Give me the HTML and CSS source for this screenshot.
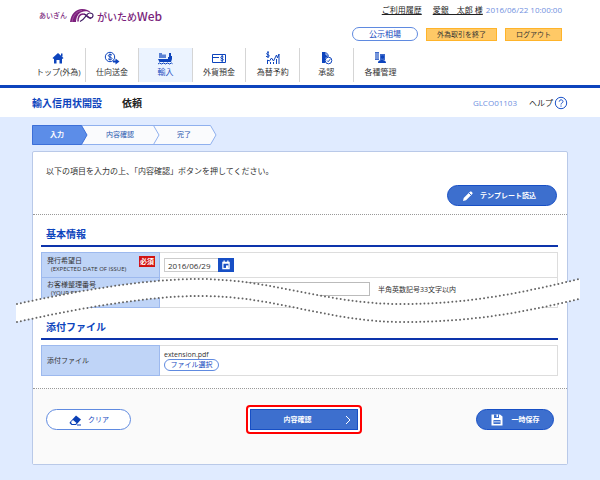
FILE: index.html
```html
<!DOCTYPE html>
<html lang="ja">
<head>
<meta charset="utf-8">
<title>輸入信用状開設 依頼</title>
<link rel="stylesheet" href="styles.css">
</head>
<body>
<header class="site-header">
  <div class="brand">
    <span class="brand-bank">あいぎん</span>
    <svg class="brand-mark" viewBox="0 0 24 14" aria-hidden="true">
      <path d="M0 13C1 5 6 0 12 0c4 0 7 1 9 4-3-2-7-2-9-1C8 4 6 9 6 13z" fill="#7b1f7c"/>
      <path d="M2 13C3 6 7 2 12 1.500" fill="none" stroke="#b36db2" stroke-width=".7"/>
      <path d="M8 12.500c0-5 2-7.500 5-7.500 4 0 5 4 8 4.500" fill="none" stroke="#7b1f7c" stroke-width="1.500"/>
      <path d="M14 5c2 0 3 4 6 4 2 0 3-1 3-2.500C23 4.500 21 4 19.500 4c-3 0-4 6-9.500 8.500" fill="none" stroke="#432066" stroke-width="1.200"/>
    </svg>
    <span class="brand-name">がいため<span class="brand-web">Web</span></span>
  </div>
  <div class="account">
    <p class="user-line"><a class="history" href="#">ご利用履歴</a><a href="#">愛銀　太郎 様</a><time>2016/06/22 10:00:00</time></p>
    <div class="account-actions">
      <button class="btn-rate" type="button">公示相場</button>
      <button class="btn-amber btn-finish" type="button">外為取引を終了</button>
      <button class="btn-amber btn-logout" type="button">ログアウト</button>
    </div>
  </div>
</header>
<nav class="main-nav">
  <a href="#"><svg viewBox="0 0 16 14"><path d="M8 2l5.500 5-1 1-.5-.400V12.500H9.500V9h-3v3.500H4V7.600l-.5.400-1-1z"/><path d="M11 2.500h1.500v3H11z"/></svg>トップ(外為)</a>
  <a href="#"><svg viewBox="0 0 16 14"><g class="line"><circle cx="6" cy="6" r="4.700"/><path d="M8 4.200C7 3 4.300 3.300 4.300 4.700S8 6 8 7.500 5 9 4 7.700M6 2.500v7"/></g><path d="M9 9.500h2.500V7.500l4 3-4 3v-2H9z"/></svg>仕向送金</a>
  <a class="current" href="#" aria-current="page"><svg viewBox="0 0 16 14"><path d="M1 8h10V6h1V2h2v3h1v3l-1 3H2.500z"/><path d="M2 2h3v1.500h4V7H2z" opacity=".65"/><path d="M1 13l1.500-1 2 1 2-1 2 1 2-1 2 1 2-1 1 .700" class="line"/></svg>輸入</a>
  <a href="#"><svg viewBox="0 0 16 14"><g class="line"><path d="M1.500 3.500h13v8h-13zM1.500 6.500H8"/><path d="M12.500 6C11 4.500 9 6 10 7.200l2 .800c1 1.500-1 2.500-2.500 1M11.200 4v7"/></g></svg>外貨預金</a>
  <a href="#"><svg viewBox="0 0 16 14"><g class="line"><path d="M4 2C3 .800 1 2 2 3.400l2 .800c1 1.500-1 2.500-3 1M3 0v7"/><path d="M2.500 13V9l2 1 2-3 2 3 3-6 1 3 1.500-4v10M5.500 13v-2m3 2v-2m3 2V8"/></g></svg>為替予約</a>
  <a href="#"><svg viewBox="0 0 16 14"><path d="M4 1h4l3 3v1.500C8 5.500 7 7 7 9v3H4z"/><path d="M8 1v3h3" stroke="#fff" stroke-width=".7" fill="none"/><g class="line"><circle cx="10.500" cy="9.500" r="3.300"/><path d="M9 9.500l1.200 1.200 2-2.500"/></g></svg>承認</a>
  <a href="#"><svg viewBox="0 0 16 14"><path d="M3 1h4v8H3zM8 3h5v6H8z" opacity=".8"/><circle cx="10.500" cy="6" r="1.700"/><path d="M6 12c0-3 2.500-3 4.500-3s3.500 1 3.500 3z"/><path d="M3 3h4M3 5h4M3 7h4" stroke="#fff" stroke-width=".6" fill="none"/></svg>各種管理</a>
</nav>
<div class="title-bar">
  <h1>輸入信用状開設<span>依頼</span></h1>
  <span class="screen-id">GLCO01103</span>
  <a class="help" href="#">ヘルプ<svg viewBox="0 0 14 14" aria-hidden="true"><circle cx="7" cy="7" r="5.700"/><path d="M5.200 5.700C5.200 3.200 9 3.300 9 5.500 9 7 7 6.800 7 8.500M7 9.500v1.200"/></svg></a>
</div>
<main>
  <div class="steps">
    <svg viewBox="0 0 185 20" aria-hidden="true">
      <path d="M.5.5h178l5.500 9.500-5.500 9.500H.5z" fill="#fafbfd" stroke="#8fb0ee"/>
      <path d="M121.500.5l5.500 9.500-5.500 9.500" fill="none" stroke="#8fb0ee"/>
      <path d="M.5.5h49L55 10l-5.500 9.500H.5z" fill="#5c8de8" stroke="#3c6fd8"/>
    </svg>
    <ol><li class="active">入力</li><li>内容確認</li><li>完了</li></ol>
  </div>
  <form class="card">
    <section class="intro">
      <p>以下の項目を入力の上、「内容確認」ボタンを押してください。</p>
      <button class="pill template" type="button"><svg viewBox="0 0 12 12"><path d="M1 11l.7-3L8 1.700C9 .500 11.500 3 10.300 4L4 10.300z"/><path d="M7 3l2.200 2.200" stroke="#3d6fce"/></svg>テンプレート読込</button>
    </section>
    <section class="fields">
      <h2>基本情報</h2>
      <div class="torn">
        <table>
          <tr class="row-date">
            <th><div class="label-line"><label for="issue">発行希望日<small>(EXPECTED DATE OF ISSUE)</small></label><em>必須</em></div></th>
            <td><div class="date"><input id="issue" type="text" value="2016/06/29"><button type="button" aria-label="カレンダー"><svg viewBox="0 0 12 12"><path d="M1.500 2H3V.500h1.500V2h3V.500H9V2h1.500v9h-9z"/><path d="M3 4.500h6v5H3z" fill="#174fc5"/><path d="M6 6.500h3V10H6z"/></svg></button></div></td>
          </tr>
          <tr class="row-ref">
            <th><label for="ref">お客様整理番号<small>(YOUR REF NO.)</small></label></th>
            <td><div class="ref"><input id="ref" type="text"><span>半角英数記号33文字以内</span></div></td>
          </tr>
        </table>
        <svg class="wave" viewBox="0 0 565 46" preserveAspectRatio="none" aria-hidden="true">
          <path class="band" d="M0 26C60 13 130 1 182 1c76 0 127 25 204 25 67 0 120-11 179-25v20c-59 14-110 23-177 23-77 0-126-26-204-26C130 18 60 31 0 44z"/>
          <path class="dots" d="M1 26C60 13 130 1 182 1c76 0 127 25 204 25 67 0 120-11 178-25"/>
          <path class="dots" d="M1 44C60 31 130 18 184 18c78 0 127 26 204 26 67 0 118-9 176-23"/>
        </svg>
      </div>
      <h2>添付ファイル</h2>
      <table>
        <tr class="row-file"><th>添付ファイル</th><td>extension.pdf<button class="choose" type="button">ファイル選択</button></td></tr>
      </table>
    </section>
    <footer class="actions">
      <button class="pill clear" type="reset"><svg viewBox="0 0 14 12"><path d="M2 8l6-6.500L13 5.500l-5 5.500H3.500L1.500 9z"/><path d="M3 8l2-2 3.500 3L7.500 10H4z" fill="#fff"/><path d="M9 11h4" stroke="#0a3fb5"/></svg>クリア</button>
      <div class="focus-frame"><button type="submit"><span>内容確認</span><svg viewBox="0 0 6 10"><path d="M1 1l4 4-4 4"/></svg></button></div>
      <button class="pill save" type="button"><svg viewBox="0 0 12 12"><path d="M.5.500H9l2.500 2V11.500H.5z"/><path d="M3 .500h5V4H3zM2.500 6h7v4h-7z" fill="#3d6fce"/><path d="M5.500.500H7v2.500H5.500zM3 7.500h6v.700H3z"/></svg>一時保存</button>
    </footer>
  </form>
</main>
</body>
</html>
```
FILE: styles.css
```css
* { box-sizing: border-box; }
body {
  margin: 0;
  background: #e0ebff;
  color: #333;
  font: 8px/12px "Open Sans", "Noto Sans CJK JP", sans-serif;
}
h1, h2, p, ol { margin: 0; padding: 0; }
a { color: inherit; text-decoration: none; }
button, input { font: inherit; color: inherit; padding: 0; margin: 0; }
svg { flex: none; }

.site-header {
  display: flex;
  justify-content: space-between;
  height: 48px;
  padding: 4px 38px 0 39px;
  background: #fff;
}
.brand { display: flex; align-items: center; height: 24px; gap: 3px; color: #7b1f7c; }
.brand-bank { font-size: 7px; font-weight: 500; }
.brand-mark { width: 24px; height: 14px; }
.brand-name { font-size: 10px; font-weight: 500; font-family: "Noto Sans CJK JP", sans-serif; }
.brand-web { font-size: 12px; }
.user-line { display: flex; justify-content: flex-end; gap: 3px; }
.user-line a { text-decoration: underline; color: #222; }
.user-line .history { margin-right: 8px; }
.user-line time { color: #6f8fe0; }
.account-actions { display: flex; justify-content: flex-end; align-items: center; margin-top: 11px; }
.btn-rate { width: 66px; height: 14px; line-height: 12px; border: 1px solid #5f8ae0; border-radius: 7px; background: #fff; color: #1247bd; }
.btn-amber { height: 13px; line-height: 11px; border: 1px solid #ffb42a; background: #ffc966; font-size: 7px; }
.btn-finish { width: 71px; margin: 0 8px; }
.btn-logout { width: 57px; }

.main-nav {
  display: grid;
  grid-template-columns: repeat(10, 1fr);
  height: 40px;
  padding: 0 32px 3px;
  border-bottom: 3px solid #0d44bd;
  background: #fff;
}
.main-nav a {
  display: flex;
  flex-direction: column;
  align-items: center;
  padding-top: 3px;
  border-right: 1px solid #d5d5d5;
  white-space: nowrap;
}
.main-nav a:last-child { border-right: 0; }
.main-nav .current { background: #ebf3ff; color: #1f50bf; }
.main-nav svg { width: 16px; height: 14px; margin-bottom: 1px; fill: #0d44bd; }
.main-nav .line { fill: none; stroke: #0d44bd; }

.title-bar { display: flex; align-items: center; height: 29px; padding: 0 32px; background: #fff; }
.title-bar h1 { margin-right: auto; font-size: 10px; font-weight: 700; color: #0d44bd; }
.title-bar h1 span { margin-left: 20px; color: #222; }
.screen-id { margin-right: 12px; color: #6f8fe0; }
.help { display: flex; align-items: center; gap: 1px; color: #222; }
.help svg { width: 14px; height: 14px; fill: none; stroke: #1c53c8; }

main { padding: 8px 32px 16px; }
.steps { display: grid; width: 185px; height: 20px; font-size: 7px; color: #2857ad; }
.steps svg, .steps ol { grid-area: 1 / 1; }
.steps svg { width: 185px; height: 20px; }
.steps ol { display: grid; grid-template-columns: 50px 76px 52px; list-style: none; line-height: 20px; text-align: center; }
.steps .active { color: #fff; font-weight: 700; }

.card { margin-top: 6px; border: 1px solid #b9c9e8; border-radius: 2px; background: #fff; }
.intro { height: 63px; padding: 13px 10px 0 13px; border-bottom: 1px dotted #999; }
.pill {
  display: flex;
  align-items: center;
  justify-content: center;
  gap: 6px;
  width: 110px;
  height: 21px;
  border: 1px solid #174fc5;
  border-radius: 11px;
  background: #3d6fce;
  color: #fff;
  font-size: 7px;
  font-weight: 700;
}
.pill svg { width: 12px; height: 12px; fill: #fff; }
.pill.template { margin: 8px 0 0 auto; padding-right: 6px; }

.fields { height: 174px; padding: 12px 9px 0 8px; border-bottom: 1px dotted #999; }
h2 { padding: 0 5px 4px; border-bottom: 2px solid #0d34ab; color: #0d44bd; font-size: 10px; font-weight: 700; line-height: 14px; }
table { width: 100%; margin-top: 5px; border-collapse: collapse; table-layout: fixed; font-size: 7px; line-height: 9px; }
th, td { border: 1px solid #ddd; padding: 0 4px; text-align: left; vertical-align: middle; }
th { width: 118px; border-color: #9db9ee; background: #bfd4f7; font-weight: 400; padding-left: 5px; }
small { display: block; padding-left: 4px; font-size: 6px; white-space: nowrap; }
.row-date { height: 25px; }
.row-ref { height: 30px; }
.row-ref th, .row-ref td { vertical-align: top; }
.row-ref th { padding-top: 2px; }
.row-ref td { padding-top: 4px; }
.label-line { display: flex; justify-content: space-between; }
.label-line label { flex: 1; width: 60px; }
.label-line em { width: 16px; height: 11px; background: #d11212; color: #fff; font-style: normal; font-weight: 700; line-height: 11px; text-align: center; }
.date, .ref { display: flex; align-items: center; }
.date input { width: 54px; height: 14px; padding-left: 3px; border: 1px solid #ccc; border-right: 0; font-size: 8px; }
.date button { display: grid; place-items: center; width: 16px; height: 14px; border: 0; background: #174fc5; }
.date svg { width: 10px; height: 10px; fill: #fff; }
.ref { gap: 8px; }
.ref input { width: 206px; height: 14px; border: 1px solid #bbb; }

.torn { position: relative; margin-bottom: 12px; }
.wave { position: absolute; left: -25px; top: 26px; width: calc(100% + 47px); height: 46px; overflow: visible; }
.band { fill: #fff; }
.dots { fill: none; stroke: #666; stroke-width: 2; stroke-linecap: round; stroke-dasharray: 0 4; }

.row-file { height: 30px; }
.choose { display: block; width: 55px; height: 12px; line-height: 10px; border: 1px solid #5f8ae0; border-radius: 6px; background: #fff; color: #1247bd; }

.actions { display: flex; justify-content: space-between; align-items: flex-start; height: 75px; padding: 16px 13px 0; background: #fafafa; }
.pill.clear { width: 85px; margin-top: 4px; border-color: #5f8ae0; background: #fff; color: #1247bd; font-weight: 400; }
.clear svg { width: 14px; fill: #0a3fb5; }
.pill.save { width: 78px; margin-top: 4px; gap: 9px; }
.focus-frame { padding: 2px; border: 2px solid #f00; border-radius: 4px; background: #fff; }
.focus-frame button { display: flex; align-items: center; width: 108px; height: 21px; padding-right: 6px; border: 1px solid #174fc5; background: #3d6fce; color: #fff; font-size: 7px; font-weight: 700; }
.focus-frame span { flex: 1; }
.focus-frame svg { width: 6px; height: 10px; fill: none; stroke: #fff; }
```
